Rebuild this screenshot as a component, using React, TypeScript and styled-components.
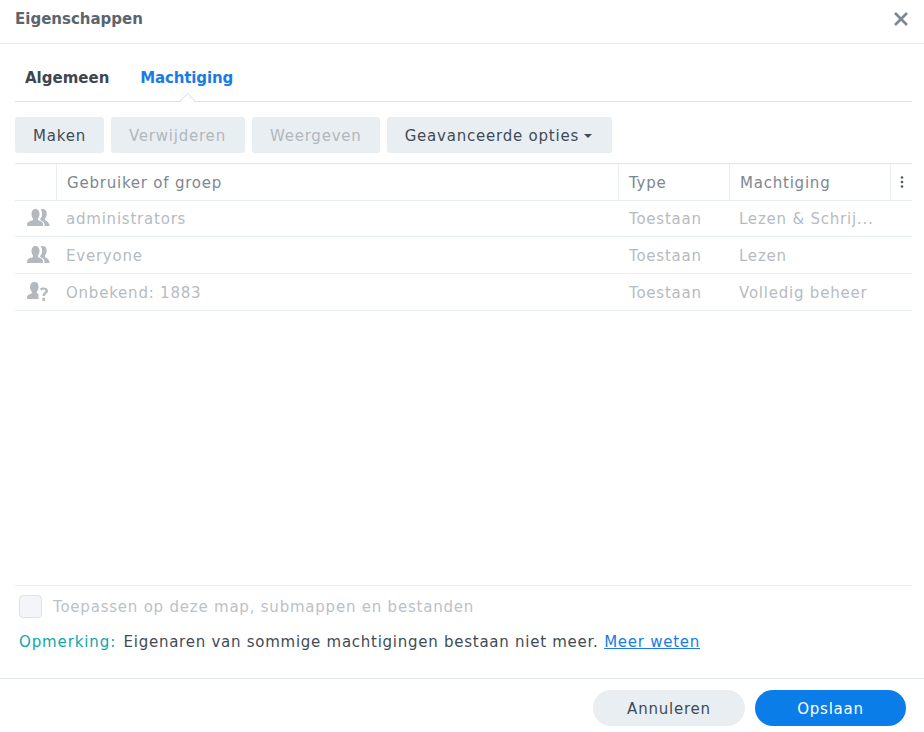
import React from 'react';
import styled, { createGlobalStyle } from 'styled-components';

const GlobalStyle = createGlobalStyle`
  html, body {
    margin: 0;
    padding: 0;
    background: #fff;
  }
  body {
    font-family: 'DejaVu Sans', Verdana, sans-serif;
    font-size: 15px;
    letter-spacing: 0.78px;
    color: #414b55;
  }
`;

//styles
const Dialog = styled.div`
  width: 924px;
  height: 732px;
  display: flex;
  flex-direction: column;
  overflow: hidden;
`;

const Header = styled.header`
  flex: none;
  display: flex;
  align-items: center;
  justify-content: space-between;
  padding: 0 15px 6px;
  box-sizing: border-box;
  height: 44px;
  border-bottom: 1px solid #e3e9ef;
`;

const Title = styled.h1`
  margin: 0;
  font-size: 15px;
  font-weight: 700;
  letter-spacing: 0;
  color: #5a6570;
`;

const CloseButton = styled.button`
  width: 16px;
  height: 16px;
  padding: 0;
  border: 0;
  background: none;
  color: #7b8794;
  display: flex;
`;

const Body = styled.main`
  flex: 1;
  display: flex;
  flex-direction: column;
  padding: 0 12px 0 15px;
  min-height: 0;
`;

const Tabs = styled.nav`
  height: 58px;
  flex: none;
  display: flex;
  align-items: flex-end;
  gap: 31px;
  padding: 0 0 14px 10px;
  box-sizing: border-box;
  border-bottom: 1px solid #d8e2ec;
  position: relative;
`;

const Tab = styled.span<{ $active?: boolean }>`
  font-size: 15px;
  line-height: 18px;
  font-weight: 700;
  letter-spacing: ${({ $active }) => ($active ? '-0.15px' : '0')};
  color: ${({ $active }) => ($active ? '#1a7be6' : '#3e4750')};
  position: relative;

  ${({ $active }) =>
    $active &&
    `
    &::after {
      content: '';
      position: absolute;
      left: 50%;
      bottom: -19px;
      width: 10px;
      height: 10px;
      margin-left: -5px;
      background: #fff;
      border-left: 1px solid #d8e2ec;
      border-top: 1px solid #d8e2ec;
      transform: rotate(45deg) scale(0.98);
    }
  `}
`;

const Toolbar = styled.div`
  flex: none;
  display: flex;
  gap: 7px;
  padding: 15px 0 10px;
`;

const ToolButton = styled.button<{ $disabled?: boolean; $menu?: boolean; $minWidth?: number }>`
  height: 36px;
  min-width: ${({ $minWidth }) => ($minWidth ? `${$minWidth}px` : 'auto')};
  padding: 1px ${({ $menu }) => ($menu ? '20px' : '18px')} 0 18px;
  border: 0;
  border-radius: 3px;
  background: #e9eef3;
  font: inherit;
  letter-spacing: inherit;
  color: ${({ $disabled }) => ($disabled ? '#b1b7bd' : '#414b55')};
  display: flex;
  align-items: center;
  gap: 5px;
`;

const Caret = styled.span`
  width: 0;
  height: 0;
  border-left: 4px solid transparent;
  border-right: 4px solid transparent;
  border-top: 4px solid #414b55;
`;

const Table = styled.div`
  flex: 1;
  border-top: 1px solid #dfe6ed;
  min-height: 0;
`;

const Grid = styled.div`
  display: grid;
  grid-template-columns: 41px 562px 111px 161px 22px;
  height: 35.67px;
  box-sizing: content-box;
  border-bottom: 1px solid #e7edf2;
  align-items: stretch;
`;

const HeadCell = styled.div`
  display: flex;
  align-items: center;
  padding: 2px 0 0 10px;
  color: #7c8791;
  border-left: 1px solid #e7edf2;

  &:first-child {
    border-left: 0;
  }
`;

const MenuCell = styled(HeadCell)`
  padding: 0;
  justify-content: center;
  color: #4f5963;
`;

const Cell = styled.div`
  display: flex;
  align-items: center;
  padding: 1.6px 0 0 11px;
  color: #b6bbc1;
  white-space: nowrap;
  overflow: hidden;
`;

const NameCell = styled(Cell)`
  padding-left: 10px;
`;

const IconCell = styled(Cell)`
  padding: 0 0 1px 12px;
  color: #b4b9bf;
`;

const Footer = styled.div`
  flex: none;
  border-top: 1px solid #e9eef2;
  height: 93px;
  padding: 9px 0 0 4px;
  box-sizing: border-box;
`;

const CheckRow = styled.label`
  display: flex;
  align-items: center;
  gap: 11px;
  height: 23px;
  color: #bcc1c6;
`;

const CheckBox = styled.span`
  width: 23px;
  height: 23px;
  box-sizing: border-box;
  border: 1px solid #d9e2ea;
  border-radius: 4px;
  background: #f3f5f8;
`;

const Note = styled.p`
  margin: 14px 0 0;
  line-height: 20px;
  letter-spacing: 0.74px;
  color: #414b55;
`;

const NoteLabel = styled.span`
  color: #10a5ad;
  letter-spacing: 0.88px;
  margin-right: 2px;
`;

const MoreLink = styled.a`
  color: #1a7be6;
  text-decoration: underline;
`;

const Actions = styled.footer`
  flex: none;
  height: 54px;
  display: flex;
  justify-content: flex-end;
  align-items: flex-start;
  gap: 10px;
  padding: 11px 18px 0 0;
  box-sizing: border-box;
  border-top: 1px solid #e3e9ef;
`;

const PillButton = styled.button<{ $primary?: boolean }>`
  width: ${({ $primary }) => ($primary ? '151px' : '152px')};
  height: 36px;
  padding: 2px 0 0;
  border: 0;
  border-radius: 18px;
  font: inherit;
  letter-spacing: inherit;
  color: ${({ $primary }) => ($primary ? '#fff' : '#414b55')};
  background: ${({ $primary }) => ($primary ? '#0a7de8' : '#e9eef3')};
`;

const GroupIcon = () => (
  <svg width="23" height="17" viewBox="0 0 23 17" fill="currentColor">
    <path d="M4.500 5C4.500 2 5.800 0 8.500 0s4 2 4 5c0 2-.7 3.600-1.500 4.600v1.200c0 .6 2.600 1.200 4.100 2.300.8.600 1 2.900 1 3.900H0c0-1 .3-3.300 1.100-3.900 1.500-1.100 4.900-1.700 4.900-2.300V9.600C5.200 8.600 4.500 7 4.500 5z" />
    <path d="M13.500.6C14.200.2 15 0 15.700 0c2.700 0 4 2 4 4.800 0 2-.7 3.600-1.700 4.600v1.400c0 .6 1.700 1.100 2.900 2.300.8.800 1.500 2.300 1.600 3.900h-4.800c-.1-1.800-.7-3.600-1.700-4.400-1-.7-1.900-1.100-2.800-1.500V9.900c1.200-1.300 1.900-3 1.900-5 0-1.800-.5-3.300-1.600-4.300z" />
  </svg>
);

const UnknownIcon = () => (
  <svg width="23" height="19" viewBox="0 0 23 19" fill="currentColor">
    <path d="M3 5c0-3 1.500-5 4.500-5s4 2 4 5c0 2-.6 3.600-1.600 4.600v1.300c0 .4.700.7 1.600 1V17H0c0-1 .2-3.300 1-3.900 1.300-1.100 3.800-1.700 3.800-2.200V9.600C3.800 8.600 3 7 3 5z" />
    <path d="M13 6.700c.9-.9 2.100-1.300 3.600-1.300 2.600 0 4.400 1.300 4.400 3.400 0 1.500-.9 2.400-1.900 3.200-.8.600-1.200 1.100-1.200 2h-2.400c0-1.500.5-2.400 1.500-3.200.9-.7 1.400-1.200 1.400-1.900 0-.8-.7-1.300-1.700-1.300-.9 0-1.800.4-2.500 1.200zM15.400 15.700h2.600V19h-2.600z" />
  </svg>
);

const rows = [
  { icon: <GroupIcon />, name: 'administrators', access: 'Lezen & Schrij...' },
  { icon: <GroupIcon />, name: 'Everyone', access: 'Lezen' },
  { icon: <UnknownIcon />, name: 'Onbekend: 1883', access: 'Volledig beheer' },
];

//component definition
const App: React.FC = () => (
  <Dialog>
    <GlobalStyle />
    <Header>
      <Title>Eigenschappen</Title>
      <CloseButton aria-label="Sluiten">
        <svg width="16" height="16" viewBox="0 0 16 16" fill="none" stroke="currentColor" strokeWidth="2.6">
          <path d="M2 2l12 12M14 2L2 14" />
        </svg>
      </CloseButton>
    </Header>
    <Body>
      <Tabs>
        <Tab>Algemeen</Tab>
        <Tab $active>Machtiging</Tab>
      </Tabs>
      <Toolbar>
        <ToolButton>Maken</ToolButton>
        <ToolButton $disabled $minWidth={134}>Verwijderen</ToolButton>
        <ToolButton $disabled>Weergeven</ToolButton>
        <ToolButton $menu>
          Geavanceerde opties
          <Caret />
        </ToolButton>
      </Toolbar>
      <Table>
        <Grid>
          <HeadCell />
          <HeadCell>Gebruiker of groep</HeadCell>
          <HeadCell>Type</HeadCell>
          <HeadCell>Machtiging</HeadCell>
          <MenuCell>
            <svg width="4" height="14" viewBox="0 0 4 14" fill="currentColor">
              <circle cx="2" cy="2.500" r="1.300" />
              <circle cx="2" cy="7" r="1.300" />
              <circle cx="2" cy="11.500" r="1.300" />
            </svg>
          </MenuCell>
        </Grid>
        {rows.map((row) => (
          <Grid key={row.name}>
            <IconCell>{row.icon}</IconCell>
            <NameCell>{row.name}</NameCell>
            <Cell>Toestaan</Cell>
            <NameCell>{row.access}</NameCell>
            <Cell />
          </Grid>
        ))}
      </Table>
      <Footer>
        <CheckRow>
          <CheckBox />
          Toepassen op deze map, submappen en bestanden
        </CheckRow>
        <Note>
          <NoteLabel>Opmerking:</NoteLabel> Eigenaren van sommige machtigingen bestaan niet meer.{' '}
          <MoreLink href="#">Meer weten</MoreLink>
        </Note>
      </Footer>
    </Body>
    <Actions>
      <PillButton>Annuleren</PillButton>
      <PillButton $primary>Opslaan</PillButton>
    </Actions>
  </Dialog>
);

export default App;
